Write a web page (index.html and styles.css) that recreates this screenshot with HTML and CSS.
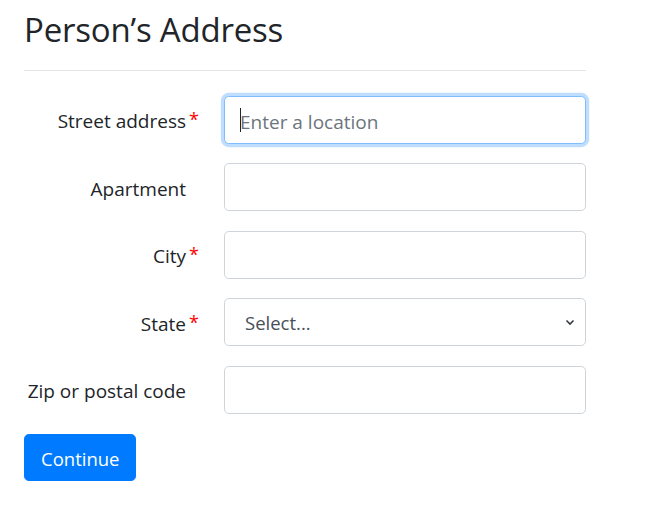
FILE: index.html
```html
<!DOCTYPE html>
<html lang="en">
<head>
<meta charset="utf-8">
<title>Person’s Address</title>
<link rel="stylesheet" href="styles.css">
</head>
<body>
<main class="page">
  <h2 class="title">Person’s Address</h2>
  <hr class="rule">
  <form class="form">
    <div class="row">
      <label class="label req" for="street">Street address</label>
      <div class="field">
        <input id="street" class="control focused" type="text" placeholder="Enter a location">
        <span class="caret"></span>
      </div>
    </div>
    <div class="row">
      <label class="label" for="apt">Apartment</label>
      <div class="field"><input id="apt" class="control" type="text"></div>
    </div>
    <div class="row">
      <label class="label req" for="city">City</label>
      <div class="field"><input id="city" class="control" type="text"></div>
    </div>
    <div class="row">
      <label class="label req" for="state">State</label>
      <div class="field">
        <div class="control select">
          <span>Select...</span>
          <svg class="chev" width="10" height="8" viewBox="0 0 10 8"><path d="M1.5 2.5 L5 6 L8.5 2.5" fill="none" stroke="#343a40" stroke-width="1.6"/></svg>
        </div>
      </div>
    </div>
    <div class="row">
      <label class="label" for="zip">Zip or postal code</label>
      <div class="field"><input id="zip" class="control" type="text"></div>
    </div>
    <button class="btn" type="button">Continue</button>
  </form>
</main>
</body>
</html>
```
FILE: styles.css
```css
* { box-sizing: border-box; }
body {
  margin: 0;
  background: #fff;
  color: #212529;
  font-family: "Open Sans", "Noto Sans", sans-serif;
}
.page {
  width: 586px;
  padding: 0 0 0 24px;
}
.title {
  margin: 10px 0 0;
  font-size: 33px;
  font-weight: 400;
  line-height: 1.2;
  letter-spacing: -0.2px;
}
.rule {
  margin: 20px 0 25px;
  border: 0;
  border-top: 1px solid rgba(0,0,0,.1);
}
.form {
  display: flex;
  flex-direction: column;
  align-items: flex-start;
}
.row {
  display: flex;
  align-items: center;
  gap: 24px;
  height: 48px;
  margin-bottom: 19.5px;
}
.label {
  width: 176px;
  margin-top: 3px;
  text-align: right;
  padding-right: 14px;
  font-size: 19px;
  position: relative;
}
.label.req::after {
  content: "*";
  position: absolute;
  right: 1px;
  top: -1px;
  color: #ff0000;
  font-size: 18px;
}
.field {
  position: relative;
  width: 362px;
  height: 48px;
}
.control {
  width: 362px;
  height: 48px;
  padding: 10px 15px 6px;
  font-family: inherit;
  font-size: 19px;
  color: #495057;
  background: #fff;
  border: 1px solid #ced4da;
  border-radius: 4.8px;
  outline: none;
}
.control::placeholder { color: #6c757d; }
.focused {
  border-color: #80bdff;
  box-shadow: 0 0 0 3.2px rgba(0,123,255,.25);
}
.caret {
  position: absolute;
  left: 16px;
  top: 12px;
  width: 1px;
  height: 24px;
  background: #212529;
}
.select {
  display: flex;
  align-items: center;
  justify-content: space-between;
  padding: 0 10px 0 20px;
  font-size: 18.5px;
}
.btn {
  margin-top: 0.5px;
  height: 47px;
  padding: 2px 16px 0;
  font-family: inherit;
  font-size: 18.5px;
  color: #fff;
  background: #007bff;
  border: 1px solid #007bff;
  border-radius: 4.8px;
}
```
